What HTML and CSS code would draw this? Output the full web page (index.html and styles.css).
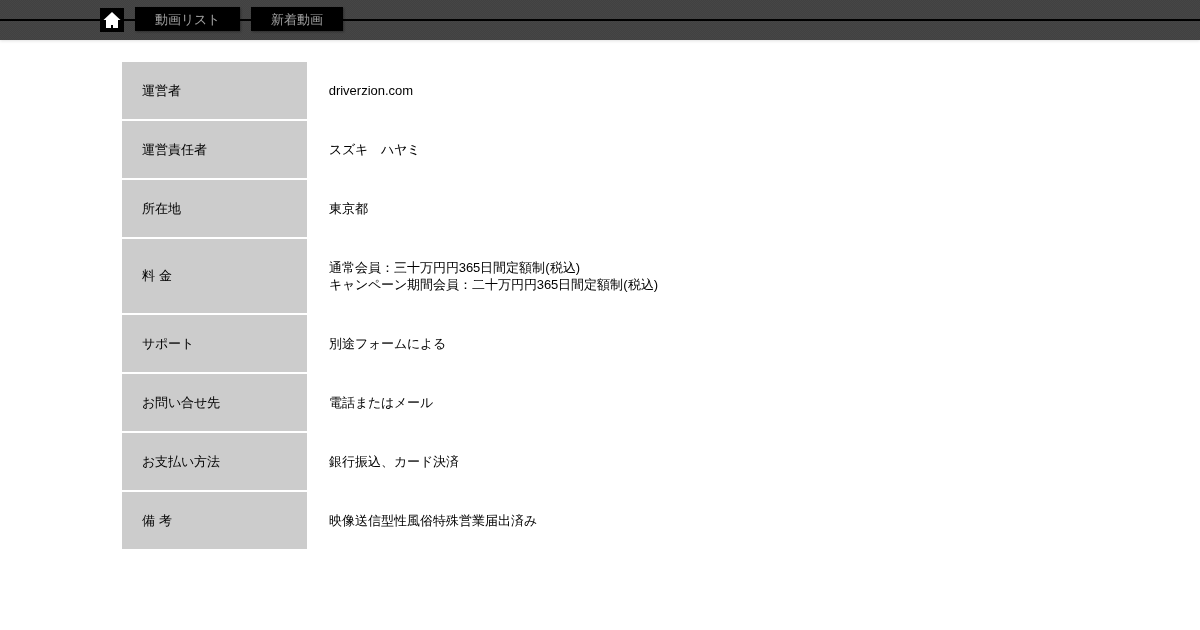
FILE: index.html
```html
<!DOCTYPE html>
<html lang="ja">
<head>
<meta charset="utf-8">
<title>運営者情報</title>
<link rel="stylesheet" href="styles.css">
</head>
<body>
<header class="bar">
  <nav class="nav">
    <a class="home" href="#" aria-label="ホーム">
      <svg class="home-icon" viewBox="0 0 18 16" width="18" height="16"><path d="M9 0 L17.5 8 L15 8 L15 16 L10 16 L10 13 L8 13 L8 16 L3 16 L3 8 L0.5 8 Z" fill="#fff"/></svg>
    </a>
    <a class="tab tab-list" href="#">動画リスト</a>
    <a class="tab tab-new" href="#">新着動画</a>
  </nav>
</header>
<main class="content">
  <table class="info">
    <tr><th>運営者</th><td>driverzion.com</td></tr>
    <tr><th>運営責任者</th><td>スズキ　ハヤミ</td></tr>
    <tr><th>所在地</th><td>東京都</td></tr>
    <tr><th class="fee">料 金</th><td>通常会員：三十万円円365日間定額制(税込)<br>キャンペーン期間会員：二十万円円365日間定額制(税込)</td></tr>
    <tr><th>サポート</th><td>別途フォームによる</td></tr>
    <tr><th>お問い合せ先</th><td>電話またはメール</td></tr>
    <tr><th>お支払い方法</th><td>銀行振込、カード決済</td></tr>
    <tr><th>備 考</th><td>映像送信型性風俗特殊営業届出済み</td></tr>
  </table>
</main>
</body>
</html>
```
FILE: styles.css
```css
* { box-sizing: border-box; }
html, body { margin: 0; padding: 0; background: #fff; }
body {
  font-family: "Liberation Sans", sans-serif;
  font-size: 13px;
  line-height: 17px;
  color: #000;
  font-kerning: none;
}
.bar {
  height: 40px;
  background:
    linear-gradient(transparent 19px, #000 19px, #000 21px, transparent 21px),
    conic-gradient(#414141 25%, #464646 0 50%, #414141 0 75%, #464646 0) 0 0 / 2px 2px;
  box-shadow: 0 1px 3px rgba(0, 0, 0, 0.12);
}
.nav {
  width: 1000px;
  margin: 0 auto;
  height: 40px;
  display: flex;
  align-items: flex-start;
  will-change: transform;
}
.home {
  width: 24px;
  height: 24px;
  margin-top: 8px;
  margin-right: 11px;
  background: #000;
  display: flex;
  align-items: center;
  justify-content: center;
}
.tab {
  height: 24px;
  margin-top: 7px;
  background: #000;
  color: #a0a0a0;
  text-decoration: none;
  text-align: center;
  font-size: 13px;
  line-height: 26px;
  box-shadow: 1px 1px 2px rgba(0, 0, 0, 0.3);
}
.tab-list { width: 105px; margin-right: 11px; }
.tab-new { width: 92px; }
.content {
  width: 960px;
  margin-left: 120px;
  padding-top: 20px;
  will-change: transform;
}
.info {
  border-collapse: separate;
  border-spacing: 2px;
}
.info th, .info td {
  padding: 20px;
  font-weight: normal;
  text-align: left;
  vertical-align: middle;
}
.info th { width: 185px; background: #ccc; }
.info th.fee { padding-bottom: 21px; }
.info td { width: 771px; }
```
